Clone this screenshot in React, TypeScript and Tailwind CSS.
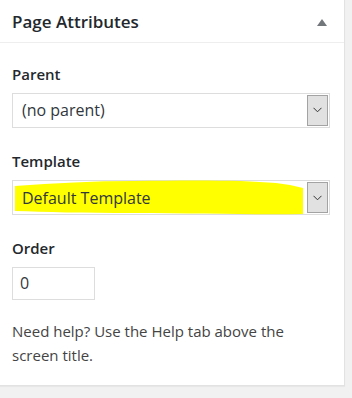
import React from "react";

const font = { fontFamily: '"Open Sans", "Noto Sans", Arial, sans-serif' };

function Chevron() {
  return (
    <svg width="9" height="6" viewBox="0 0 9 6" fill="none">
      <path d="M0.5 0.8 L4.5 4.8 L8.5 0.8" stroke="#333" strokeWidth="1" />
    </svg>
  );
}

function FakeSelect({ value, highlight }: { value: string; highlight?: boolean }) {
  return (
    <div className="relative flex h-[35px] w-[318px] border border-[#dddddd] bg-white">
      {highlight && (
        <svg
          className="absolute left-[1px] top-[-1px]"
          width="292"
          height="36"
          viewBox="0 0 292 36"
        >
          <path
            d="M1 6 C40 3 80 1 120 1 C180 0 230 0 262 3 L276 5 L289 8 L289 34 C240 35 180 33 120 33 C70 33 30 32 1 31 Z"
            fill="#ffff00"
          />
        </svg>
      )}
      <div className="relative flex flex-1 items-center pl-[9px] text-[16px] text-[#32373c]">
        {value}
      </div>
      <div className="my-[1px] mr-[1px] flex w-[21px] items-center justify-center border border-[#a3a3a3] bg-[#e1e1e1]">
        <Chevron />
      </div>
    </div>
  );
}

export default function App() {
  return (
    <div className="min-h-screen bg-[#f1f1f1]" style={font}>
      <div className="w-[345px] border-r border-b border-[#e2e2e2] bg-white shadow-[0_1px_1px_rgba(0,0,0,0.04)]">
        <div className="flex h-[43px] items-center justify-between border-b border-[#eeeeee] pt-[2px] pl-3 pr-[17px]">
          <h2 className="text-[17px] font-semibold text-[#23282d]">Page Attributes</h2>
          <svg width="10" height="7" viewBox="0 0 10 7">
            <path d="M5 0 L10 7 L0 7 Z" fill="#72777c" />
          </svg>
        </div>
        <div className="px-3 pb-[18px]">
          <div className="mt-[20px] mb-[7px] text-[15px] font-semibold text-[#23282d]">Parent</div>
          <FakeSelect value="(no parent)" />
          <div className="mt-[22px] mb-[8px] text-[15px] font-semibold text-[#23282d]">Template</div>
          <FakeSelect value="Default Template" highlight />
          <div className="mt-[22px] mb-[7px] text-[15px] font-semibold text-[#23282d]">Order</div>
          <div className="flex h-[33px] w-[83px] items-center border border-[#dddddd] pl-[7px] text-[16px] text-[#32373c]">
            0
          </div>
          <p className="mt-[19px] text-[15px] leading-[24px] text-[#444444]">
            Need help? Use the Help tab above the
            <br />
            screen title.
          </p>
        </div>
      </div>
    </div>
  );
}
